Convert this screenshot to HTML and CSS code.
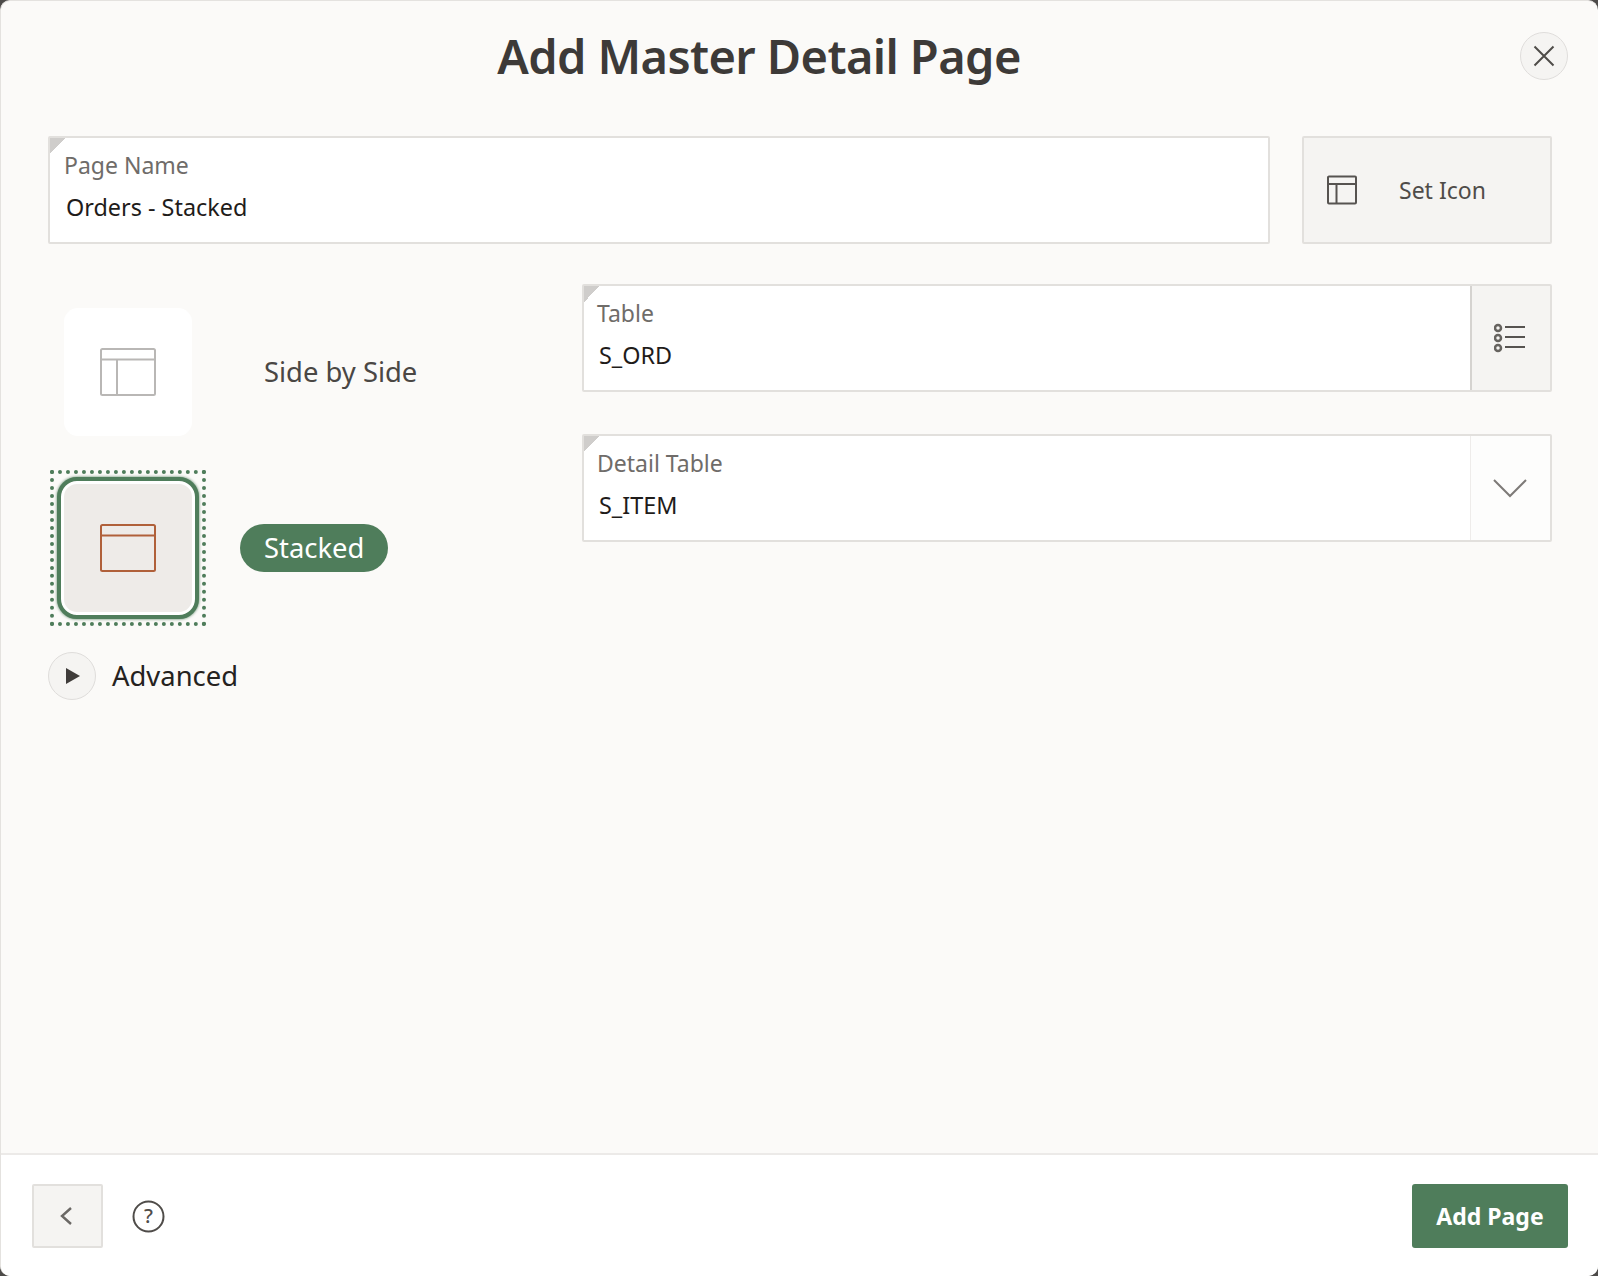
FILE: index.html
```html
<!DOCTYPE html>
<html lang="en">
<head>
  <meta charset="UTF-8" />
  <title>Add Master Detail Page</title>
  <link rel="stylesheet" href="styles.css">
</head>
<body>
  <div class="dialog">
    <header class="dialog-header">
      <h1>Add Master Detail Page</h1>
      <button class="close-btn" aria-label="Close">
        <svg width="24" height="24" viewBox="0 0 24 24"><path d="M2.5 2.5l19 19M21.5 2.5l-19 19" fill="none" stroke="#4f4c49" stroke-width="2"/></svg>
      </button>
    </header>

    <main class="dialog-body">
      <div class="top-row">
        <div class="field field-name">
          <label>Page Name</label>
          <div class="value">Orders - Stacked</div>
        </div>
        <button class="set-icon">
          <svg width="30" height="30" viewBox="0 0 30 30"><path d="M2 1.500h26a1 1 0 0 1 1 1v25a1 1 0 0 1-1 1H2a1 1 0 0 1-1-1v-25a1 1 0 0 1 1-1zM1 9h28M9.500 9v19.500" fill="none" stroke="#565350" stroke-width="2"/></svg>
          <span>Set Icon</span>
        </button>
      </div>

      <div class="columns">
        <div class="layouts">
          <div class="layout-option">
            <div class="tile">
              <svg width="56" height="48" viewBox="0 0 56 48"><path d="M2.500 1h51a1.500 1.500 0 0 1 1.500 1.500v43a1.500 1.500 0 0 1-1.500 1.500h-51A1.500 1.500 0 0 1 1 45.500v-43A1.500 1.500 0 0 1 2.500 1zM1 11.500h54M17 11.500V47" fill="none" stroke="#b9b7b5" stroke-width="2"/></svg>
            </div>
            <span class="layout-label">Side by Side</span>
          </div>
          <div class="layout-option selected">
            <div class="tile-focus">
              <div class="tile tile-selected">
                <svg width="56" height="48" viewBox="0 0 56 48"><path d="M2.500 1h51a1.500 1.500 0 0 1 1.500 1.500v43a1.500 1.500 0 0 1-1.500 1.500h-51A1.500 1.500 0 0 1 1 45.500v-43A1.500 1.500 0 0 1 2.500 1zM1 11.500h54" fill="none" stroke="#b0603a" stroke-width="2"/></svg>
              </div>
            </div>
            <span class="layout-label pill">Stacked</span>
          </div>
          <div class="advanced">
            <button class="expand-btn" aria-label="Expand">
              <svg width="14" height="16" viewBox="0 0 14 16"><path d="M0 0l14 8-14 8z" fill="#3f3c3a"/></svg>
            </button>
            <span>Advanced</span>
          </div>
        </div>

        <div class="tables">
          <div class="field field-split">
            <div class="field-main">
              <label>Table</label>
              <div class="value">S_ORD</div>
            </div>
            <button class="field-btn field-btn-list" aria-label="List">
              <svg width="34" height="30" viewBox="0 0 34 30"><g fill="none" stroke="#66635f" stroke-width="2.500"><circle cx="4" cy="5" r="3"/><circle cx="4" cy="15" r="3"/><circle cx="4" cy="25" r="3"/></g><path d="M11 4h20M11 14h20M11 24h20" stroke="#565350" stroke-width="2"/></svg>
            </button>
          </div>
          <div class="field field-split">
            <div class="field-main">
              <label>Detail Table</label>
              <div class="value">S_ITEM</div>
            </div>
            <button class="field-btn" aria-label="Open">
              <svg width="34" height="20" viewBox="0 0 34 20"><path d="M1 2l16 16L33 2" fill="none" stroke="#7d7a77" stroke-width="2"/></svg>
            </button>
          </div>
        </div>
      </div>
    </main>

    <footer class="dialog-footer">
      <button class="back-btn" aria-label="Back">
        <svg width="14" height="20" viewBox="0 0 14 20"><path d="M12 2L3 10l9 8" fill="none" stroke="#6b6865" stroke-width="2.400"/></svg>
      </button>
      <svg class="help-icon" width="33" height="33" viewBox="0 0 33 33"><circle cx="16.500" cy="16.500" r="15" fill="none" stroke="#4f4c49" stroke-width="2"/><text x="16.500" y="23" text-anchor="middle" class="help-mark">?</text></svg>
      <button class="add-btn">Add Page</button>
    </footer>
  </div>
</body>
</html>
```

FILE: styles.css
```css
* {
  box-sizing: border-box;
}

html, body {
  height: 100%;
}

body {
  margin: 0;
  background-color: #4d4b49;
  font-family: "Noto Sans", sans-serif;
  color: #312d2a;
}

button {
  font-family: inherit;
  cursor: pointer;
}

.dialog {
  display: flex;
  flex-direction: column;
  height: 1276px;
  background-color: #fbfaf8;
  border: 1px solid #e4e2df;
  border-bottom: none;
  border-right: none;
  border-radius: 10px;
  overflow: hidden;
}

/* Header */
.dialog-header {
  display: flex;
  align-items: center;
  height: 135px;
  padding: 0 30px 25px 47px;
}

.dialog-header h1 {
  flex: 1;
  margin: 0;
  padding-right: 50px;
  text-align: center;
  font-size: 47px;
  font-weight: 600;
  color: #3d3a38;
  letter-spacing: -0.6px;
}

.close-btn {
  display: flex;
  align-items: center;
  justify-content: center;
  width: 48px;
  height: 48px;
  padding: 0;
  background-color: #f5f4f2;
  border: 1px solid #dfdddb;
  border-radius: 50%;
}

/* Body */
.dialog-body {
  flex: 1;
  padding: 0 46px 0 47px;
}

.top-row {
  display: flex;
  gap: 32px;
}

.field {
  position: relative;
  height: 108px;
  background-color: #fff;
  border: 2px solid #e2e0dd;
  border-radius: 2px;
}

.field::before {
  content: "";
  position: absolute;
  top: 0;
  left: 0;
  width: 16px;
  height: 16px;
  background: linear-gradient(135deg, #cfcdcb 50%, transparent 50%);
}

.field-name {
  flex: 1;
  padding: 12px 14px;
}

.field label {
  display: block;
  font-size: 23px;
  line-height: 30px;
  color: #6f6c69;
}

.value {
  margin-top: 12px;
  padding-left: 2px;
  font-size: 23.4px;
  line-height: 30px;
  color: #1f1c1a;
}

.set-icon {
  display: flex;
  align-items: center;
  width: 250px;
  height: 108px;
  padding: 0 0 0 23px;
  background-color: #f5f4f2;
  border: 2px solid #e2e0dd;
  border-radius: 2px;
  font-size: 23px;
  color: #4f4c49;
}

.set-icon span {
  margin-left: 42px;
}

.columns {
  display: flex;
  margin-top: 40px;
}

.layouts {
  width: 534px;
}

.layout-option {
  display: flex;
  align-items: center;
  font-size: 27.4px;
  color: #4a4744;
}

.layout-option:first-child {
  padding: 24px 0 0 16px;
}

.layout-option:first-child .layout-label {
  margin-left: 72px;
  padding-bottom: 2px;
}

.tile {
  display: flex;
  align-items: center;
  justify-content: center;
  width: 128px;
  height: 128px;
  background-color: #fff;
  border-radius: 14px;
}

.selected {
  margin-top: 34px;
  padding-left: 2px;
}

.tile-focus {
  padding: 3px;
  border: 4px dotted #4f7d5b;
}

.tile-selected {
  width: 142px;
  height: 142px;
  background-color: #eeebe8;
  border: 4px solid #4f7d5b;
  box-shadow: inset 0 0 0 3px #fff, 0 0 3px #4f7d5b;
  border-radius: 20px;
}

.pill {
  margin-left: 34px;
  padding: 0 24px;
  line-height: 48px;
  background-color: #4f7d5b;
  border-radius: 24px;
  color: #fff;
}

.advanced {
  display: flex;
  align-items: center;
  gap: 16px;
  margin-top: 26px;
  font-size: 27.4px;
  line-height: 44px;
  color: #252220;
}

.expand-btn {
  display: flex;
  align-items: center;
  justify-content: center;
  width: 48px;
  height: 48px;
  padding: 0 0 0 1px;
  background-color: #f5f4f2;
  border: 1px solid #dfdddb;
  border-radius: 50%;
}

.tables {
  flex: 1;
  display: flex;
  flex-direction: column;
  gap: 42px;
}

.field-split {
  display: flex;
}

.field-main {
  flex: 1;
  padding: 12px 13px;
}

.field-btn {
  display: flex;
  align-items: center;
  justify-content: center;
  width: 80px;
  padding: 0 2px 0 0;
  background-color: #fdfdfc;
  border: none;
  border-left: 1px solid #eeecea;
}

.field-btn-list {
  padding: 0;
  background-color: #f5f4f2;
  border-left: 2px solid #d5d3d0;
}

/* Footer */
.dialog-footer {
  display: flex;
  align-items: center;
  height: 123px;
  padding: 1px 30px 0 31px;
  background-color: #fff;
  border-top: 2px solid #eceae8;
}

.back-btn {
  display: flex;
  align-items: center;
  justify-content: center;
  width: 71px;
  height: 64px;
  padding: 0 3px 0 0;
  background-color: #f5f4f2;
  border: 2px solid #e2e0dd;
  border-radius: 2px;
}

.help-icon {
  margin-left: 29px;
}

.help-mark {
  font-size: 20px;
  font-weight: 500;
  fill: #4f4c49;
}

.add-btn {
  margin-left: auto;
  width: 156px;
  height: 64px;
  padding: 0;
  background-color: #4f7d5b;
  border: none;
  border-radius: 3px;
  font-size: 23px;
  font-weight: 700;
  color: #fff;
}
```
